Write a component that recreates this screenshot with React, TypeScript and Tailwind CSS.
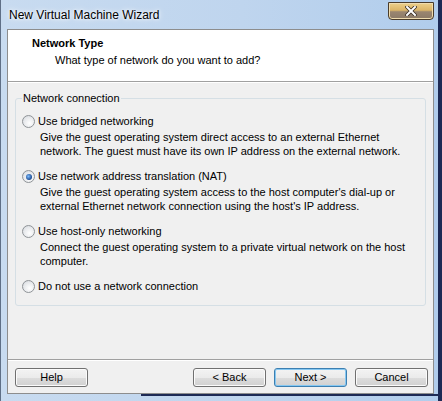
import React from "react";

function Radio({ checked }: { checked?: boolean }) {
  return (
    <span className="w-[13px] h-[13px] shrink-0 rounded-full border border-[#8f9397] bg-[radial-gradient(circle_at_60%_65%,#ffffff,#e6e8eb_60%,#cdd2d8)] flex items-center justify-center">
      {checked ? (
        <span className="w-[6px] h-[6px] rounded-full bg-[radial-gradient(circle_at_40%_40%,#7cbcff,#1c4a90_70%,#0f2f66)]" />
      ) : null}
    </span>
  );
}

function Option({
  label,
  lines,
  checked,
  first,
}: {
  label: string;
  lines?: string[];
  checked?: boolean;
  first?: boolean;
}) {
  return (
    <div className={first ? "" : "mt-[12px]"}>
      <div className="flex items-center h-[13px] leading-[13px]">
        <Radio checked={checked} />
        <span className="ml-[3px] whitespace-nowrap">{label}</span>
      </div>
      {lines ? (
        <div className="mt-[2px] ml-[18px] leading-[14px]">
          {lines.map((l) => (
            <div key={l} className="whitespace-nowrap">
              {l}
            </div>
          ))}
        </div>
      ) : null}
    </div>
  );
}

function Btn({ children, def }: { children: React.ReactNode; def?: boolean }) {
  return (
    <button
      className={
        "h-[19px] w-[73px] rounded-[3px] border text-[11px] leading-[17px] text-black bg-[linear-gradient(#f3f3f3_0%,#ebebeb_50%,#dddddd_50%,#d0d0d0_100%)] " +
        (def
          ? "border-[#3c7fb1] shadow-[inset_0_0_0_1px_#86c8f2]"
          : "border-[#707070] shadow-[inset_0_0_0_1px_#fbfbfb]")
      }
    >
      {children}
    </button>
  );
}

export default function App() {
  return (
    <div className="w-[442px] h-[401px] flex overflow-hidden font-['Tahoma','Liberation_Sans',sans-serif] text-[11px] text-black">
      <div className="flex-1 flex flex-col border-l border-[#5f6f86] bg-[linear-gradient(90deg,#c8dbf0,#bfd5ee_55%,#b1cdec)]">
        {/* title bar */}
        <div className="h-[29px] shrink-0 flex items-start">
          <div className="flex-1 pl-[8px] pt-[7px] text-[12px] leading-[16px] [text-shadow:0_0_6px_#ffffff,0_0_3px_#ffffff]">
            New Virtual Machine Wizard
          </div>
          <div className="mt-[2px] mr-[4px] w-[46px] h-[18px] rounded-b-[4px] border border-[#4a3c2a] bg-[linear-gradient(#ecd08c,#dcb567_45%,#9a8670_55%,#8c7a66)] shadow-[inset_0_0_0_1px_#efdcaf] flex items-center justify-center">
            <svg width="12" height="10" viewBox="0 0 12 10">
              <path d="M2 1 L10 9 M10 1 L2 9" stroke="#3a2f25" strokeWidth="3.6" strokeLinecap="square" />
              <path d="M2 1 L10 9 M10 1 L2 9" stroke="#ffffff" strokeWidth="2" strokeLinecap="square" />
            </svg>
          </div>
        </div>
        {/* body */}
        <div className="flex flex-1 min-h-0">
          <div className="w-[6px] shrink-0" />
          <div className="w-[427px] shrink-0 border border-[#8d8d8d] bg-[#f0f0f0] flex flex-col">
            {/* header */}
            <div className="h-[51px] bg-white pt-[7px] pl-[24px] leading-[13px]">
              <div className="font-bold">Network Type</div>
              <div className="mt-[4px] pl-[23px]">What type of network do you want to add?</div>
            </div>
            <div className="h-px bg-[#a0a0a0]" />
            <div className="h-px bg-white" />
            {/* group */}
            <fieldset className="mt-[9px] mx-[7px] border border-[#d5dfe5] rounded-[3px] pl-[6px] pr-[6px] pt-[10px] pb-[12px]">
              <legend className="px-[1px] leading-[13px]">Network connection</legend>
              <Option
                first
                label="Use bridged networking"
                lines={[
                  "Give the guest operating system direct access to an external Ethernet",
                  "network. The guest must have its own IP address on the external network.",
                ]}
              />
              <Option
                checked
                label="Use network address translation (NAT)"
                lines={[
                  "Give the guest operating system access to the host computer's dial-up or",
                  "external Ethernet network connection using the host's IP address.",
                ]}
              />
              <Option
                label="Use host-only networking"
                lines={[
                  "Connect the guest operating system to a private virtual network on the host",
                  "computer.",
                ]}
              />
              <Option label="Do not use a network connection" />
            </fieldset>
            <div className="flex-1" />
            <div className="h-px bg-[#a0a0a0]" />
            <div className="h-px bg-white" />
            <div className="flex items-center pt-[7px] pb-[6px] pl-[7px] pr-[5px]">
              <Btn>Help</Btn>
              <div className="flex-1" />
              <div className="flex gap-[8px]">
                <Btn>&lt; Back</Btn>
                <Btn def>Next &gt;</Btn>
                <Btn>Cancel</Btn>
              </div>
            </div>
          </div>
          <div className="w-[4px] shrink-0" />
        </div>
        <div className="h-[7px] shrink-0 flex flex-col">
          <div className="h-[2px] ml-[140px] bg-[#1d2a55]" />
        </div>
      </div>
      <div className="w-[4px] shrink-0 bg-[#1d2a55]" />
    </div>
  );
}
